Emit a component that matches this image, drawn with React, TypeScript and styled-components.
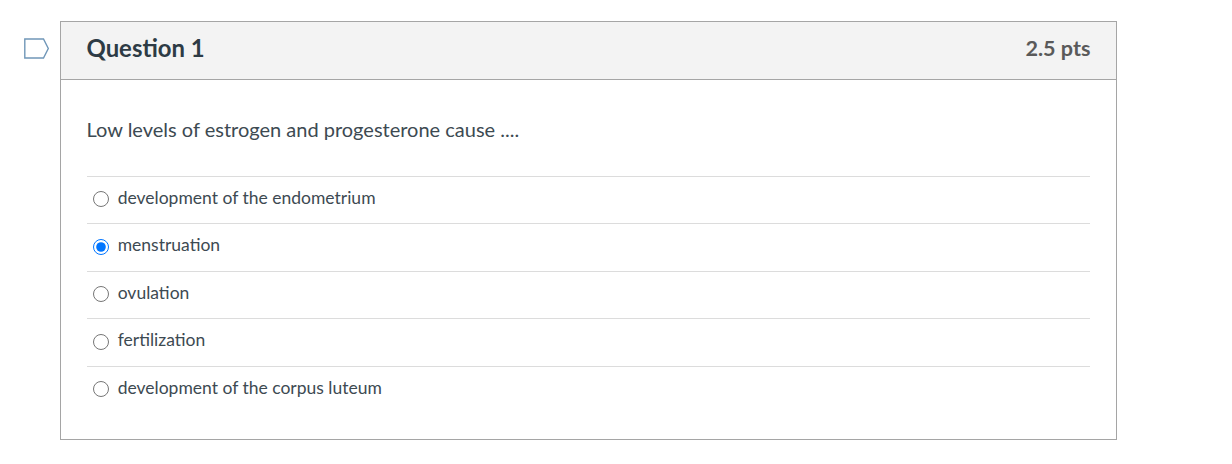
import React from "react";
import styled, { createGlobalStyle } from "styled-components";

const Global = createGlobalStyle`
  html, body { margin: 0; padding: 0; background: #fff; }
  body { font-family: Lato, "Liberation Sans", sans-serif; color: #2d3b45; }
`;

const Page = styled.div`
  display: flex;
  align-items: flex-start;
  padding: 21px 0 0 24px;
`;

const FlagSlot = styled.div`
  width: 36px;
  flex: none;
  padding-top: 17px;
  line-height: 0;
`;

const Card = styled.section`
  width: 1057px;
  height: 419px;
  box-sizing: border-box;
  border: 1px solid #a5a5a5;
`;

const Header = styled.header`
  display: flex;
  align-items: center;
  justify-content: space-between;
  box-sizing: border-box;
  height: 58px;
  padding: 0 25.5px 5px 25.5px;
  background: #f3f3f3;
  border-bottom: 1px solid #a5a5a5;
`;

const Title = styled.h2`
  margin: 0 0 1px;
  font-size: 23.9px;
  font-weight: 700;
  color: #2d3b45;
`;

const Points = styled.div`
  font-size: 21.6px;
  font-weight: 700;
  color: #5a5a5a;
`;

const Body = styled.div`
  padding: 35px 26px 0 25.5px;
`;

const Prompt = styled.p`
  margin: 0 0 32.9px;
  font-size: 20px;
  line-height: 28px;
  color: #3d4a52;
`;

const Answers = styled.div`
  display: flex;
  flex-direction: column;
`;

const Answer = styled.label`
  display: flex;
  align-items: center;
  box-sizing: border-box;
  height: 47.5px;
  padding: 0 0 5.6px 6.5px;
  border-top: 1px solid #dcdcdc;
  font-size: 17.5px;
  color: #3d4a52;
`;

const Radio = styled.input.attrs({ type: "radio", name: "q1" })`
  width: 16px;
  height: 16px;
  margin: 3.6px 8.7px 0 0;
  flex: none;
`;

const answers = [
  { text: "development of the endometrium", checked: false },
  { text: "menstruation", checked: true },
  { text: "ovulation", checked: false },
  { text: "fertilization", checked: false },
  { text: "development of the corpus luteum", checked: false },
];

export default function App() {
  return (
    <>
      <Global />
      <Page>
        <FlagSlot>
          <svg width="26" height="22" viewBox="0 0 26 22" aria-hidden="true">
            <path d="M0.8 1H19.5L24.3 10.5L19.5 20H0.8Z" fill="#fff" stroke="#7097b8" strokeWidth="1.4" />
          </svg>
        </FlagSlot>
        <Card>
          <Header>
            <Title>Question 1</Title>
            <Points>2.5 pts</Points>
          </Header>
          <Body>
            <Prompt>Low levels of estrogen and progesterone cause ....</Prompt>
            <Answers>
              {answers.map((a) => (
                <Answer key={a.text}>
                  <Radio defaultChecked={a.checked} />
                  {a.text}
                </Answer>
              ))}
            </Answers>
          </Body>
        </Card>
      </Page>
    </>
  );
}
